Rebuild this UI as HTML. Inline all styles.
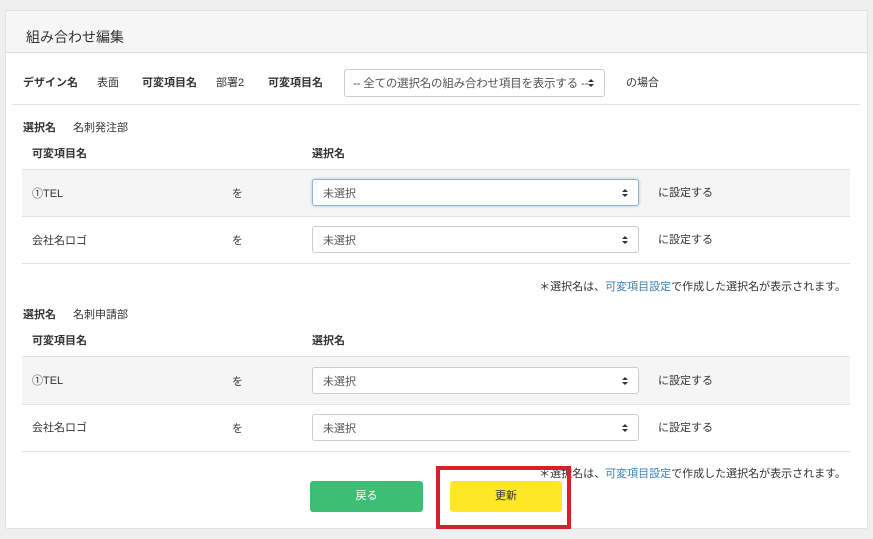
<!DOCTYPE html>
<html><head><meta charset="utf-8"><style>
body{margin:0;width:873px;height:539px;background:#efefef;font-family:"Liberation Sans","Noto Sans CJK JP",sans-serif;font-size:11px;color:#333;position:relative;overflow:hidden}
.a{position:absolute;white-space:nowrap}
.panel{position:absolute;left:5px;top:10px;width:863px;height:519px;background:#fff;border:1px solid #e2e2e2;box-sizing:border-box;border-radius:3px}
.hdr{position:absolute;left:5px;top:10px;width:863px;height:43px;background:#f6f6f6;border:1px solid #e2e2e2;border-bottom:1px solid #ddd;box-sizing:border-box}
.b{font-weight:bold}
.line{position:absolute;left:22px;width:828px;height:1px;background:#e3e3e3}
.sel{position:absolute;left:312px;width:327px;height:27px;border:1px solid #ccc;border-radius:3px;box-sizing:border-box;background:#fff;padding-left:10px;padding-top:3px;line-height:22px;color:#555;white-space:nowrap}
.sel i{position:absolute;right:10px;top:9px;width:6px;height:8px;display:block}
.sel svg{display:block}
.gray{position:absolute;left:22px;width:828px;background:#f5f5f5}
a{color:#3a82b8;text-decoration:none}
</style></head><body>
<div class="panel"></div>
<div class="hdr"></div>
<div class="a" style="left:26px;top:27px;font-size:14px;color:#333">組み合わせ編集</div>
<div class="a b" style="left:23px;top:74px">デザイン名</div>
<div class="a" style="left:97px;top:74px">表面</div>
<div class="a b" style="left:142px;top:74px">可変項目名</div>
<div class="a" style="left:216px;top:74px">部署2</div>
<div class="a b" style="left:268px;top:74px">可変項目名</div>
<div class="sel" style="left:344px;top:69px;width:261px;height:28px;line-height:22px;padding-left:8px;font-size:11.5px;letter-spacing:-0.2px">-- 全ての選択名の組み合わせ項目を表示する --<i><svg width="6" height="8"><path d="M0 3L3 0L6 3ZM0 5L3 8L6 5Z" fill="#333"/></svg></i></div>
<div class="a" style="left:626px;top:74px">の場合</div>
<div class="line" style="left:12px;width:848px;top:104px"></div>

<div class="a b" style="left:23px;top:119px">選択名</div>
<div class="a" style="left:73px;top:119px">名刺発注部</div>
<div class="a b" style="left:32px;top:145px">可変項目名</div>
<div class="a b" style="left:312px;top:145px">選択名</div>
<div class="gray" style="top:169px;height:47px"></div>
<div class="line" style="top:169px"></div>
<div class="a" style="left:32px;top:185px">①TEL</div>
<div class="a" style="left:232px;top:185px">を</div>
<div class="sel" style="top:179px;border-color:#8fb4d6;box-shadow:0 0 3px #a9c6e2">未選択<i><svg width="6" height="8"><path d="M0 3L3 0L6 3ZM0 5L3 8L6 5Z" fill="#333"/></svg></i></div>
<div class="a" style="left:658px;top:184px">に設定する</div>
<div class="line" style="top:216px"></div>
<div class="a" style="left:32px;top:232px">会社名ロゴ</div>
<div class="a" style="left:232px;top:232px">を</div>
<div class="sel" style="top:226px">未選択<i><svg width="6" height="8"><path d="M0 3L3 0L6 3ZM0 5L3 8L6 5Z" fill="#333"/></svg></i></div>
<div class="a" style="left:658px;top:231px">に設定する</div>
<div class="line" style="top:263px"></div>
<div class="a" style="right:27px;top:278px">＊選択名は、<a>可変項目設定</a>で作成した選択名が表示されます。</div>

<div class="a b" style="left:23px;top:306px">選択名</div>
<div class="a" style="left:73px;top:306px">名刺申請部</div>
<div class="a b" style="left:32px;top:332px">可変項目名</div>
<div class="a b" style="left:312px;top:332px">選択名</div>
<div class="gray" style="top:356px;height:48px"></div>
<div class="line" style="top:356px"></div>
<div class="a" style="left:32px;top:372px">①TEL</div>
<div class="a" style="left:232px;top:373px">を</div>
<div class="sel" style="top:367px">未選択<i><svg width="6" height="8"><path d="M0 3L3 0L6 3ZM0 5L3 8L6 5Z" fill="#333"/></svg></i></div>
<div class="a" style="left:658px;top:372px">に設定する</div>
<div class="line" style="top:404px"></div>
<div class="a" style="left:32px;top:419px">会社名ロゴ</div>
<div class="a" style="left:232px;top:420px">を</div>
<div class="sel" style="top:414px">未選択<i><svg width="6" height="8"><path d="M0 3L3 0L6 3ZM0 5L3 8L6 5Z" fill="#333"/></svg></i></div>
<div class="a" style="left:658px;top:419px">に設定する</div>
<div class="line" style="top:451px"></div>
<div class="a" style="right:27px;top:465px">＊選択名は、<a>可変項目設定</a>で作成した選択名が表示されます。</div>

<div class="a" style="left:310px;top:481px;width:113px;height:31px;background:#3cbf74;border-radius:3px;color:#fff;text-align:center;line-height:31px">戻る</div>
<div class="a" style="left:450px;top:481px;width:112px;height:31px;background:#fde726;border-radius:3px;color:#333;text-align:center;line-height:31px">更新</div>
<div class="a" style="left:436px;top:466px;width:135px;height:63px;border:4px solid #d6212b;box-sizing:border-box"></div>
</body></html>
